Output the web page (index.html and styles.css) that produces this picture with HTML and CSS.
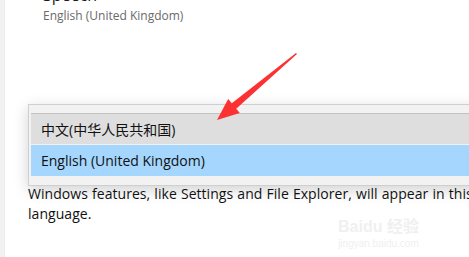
FILE: index.html
```html
<!DOCTYPE html>
<html lang="en">
<head>
    <meta charset="UTF-8">
    <title>Windows display language</title>
    <link rel="stylesheet" href="styles.css">
</head>
<body>
<div class="nav-strip"></div>
<main>
    <div class="setting">
        <div class="setting-title">Speech</div>
        <div class="setting-sub">English (United Kingdom)</div>
    </div>
    <div class="dropdown">
        <div class="option">中文(中华人民共和国)</div>
        <div class="option selected">English (United Kingdom)</div>
    </div>
    <p class="note">Windows features, like Settings and File Explorer, will appear in this language.</p>
    <div class="watermark">
        <div class="wm-logo">Baidu 经验</div>
        <div class="wm-url">jingyan.baidu.com</div>
    </div>
</main>
<svg class="arrow" width="100" height="85" viewBox="0 0 100 85">
    <polygon points="97,14 36.2,68.7 39.8,72.9 17,80 28.2,59.1 31.8,63.3 96,13" fill="#fc3232"/>
</svg>
</body>
</html>
```

FILE: styles.css
```css
* {
    box-sizing: border-box;
}

html, body {
    margin: 0;
    height: 100%;
    overflow: hidden;
}

body {
    display: flex;
    background-color: white;
    font-family: 'Open Sans', 'Noto Sans CJK SC', sans-serif;
    color: #1a1a1a;
}

.nav-strip {
    width: 5px;
    flex-shrink: 0;
    background-color: #f2f2f2;
    border-right: 1px solid #ececec;
}

main {
    flex: 1;
    position: relative;
    min-width: 0;
}

.setting {
    margin: -15px 0 0 38px;
}

.setting-title {
    font-size: 16px;
    line-height: 20px;
}

.setting-sub {
    font-size: 12px;
    line-height: 18px;
    color: #6a6a6a;
    margin-top: 2px;
}

.dropdown {
    margin: 79px -20px 0 23px;
    padding: 8px 0 9px 2px;
    background-color: #f2f2f2;
    border: 1px solid #cfcfcf;
    box-shadow: 0 4px 14px rgba(0, 0, 0, 0.18);
}

.option {
    height: 31px;
    line-height: 31px;
    padding-left: 10px;
    font-size: 14px;
    color: #111;
    background-color: #dedede;
    border-top: 1px solid #c2c2c2;
}

.option.selected {
    margin-top: 1px;
    background-color: #a5d6fe;
    border-top: none;
}

.note {
    margin: -2px -40px 0 23px;
    font-size: 14px;
    letter-spacing: 0.05px;
    word-spacing: 0.4px;
    line-height: 20px;
    color: #111;
}

.watermark {
    position: absolute;
    left: 333px;
    top: 217px;
    display: flex;
    flex-direction: column;
    align-items: center;
    gap: 2px;
    color: #f0f0f0;
    font-family: 'Liberation Sans', 'Noto Sans CJK SC', sans-serif;
}

.wm-logo {
    font-size: 16px;
    line-height: 19px;
    font-weight: bold;
}

.wm-url {
    font-size: 10px;
    line-height: 12px;
}

.arrow {
    position: absolute;
    left: 200px;
    top: 40px;
}
```
